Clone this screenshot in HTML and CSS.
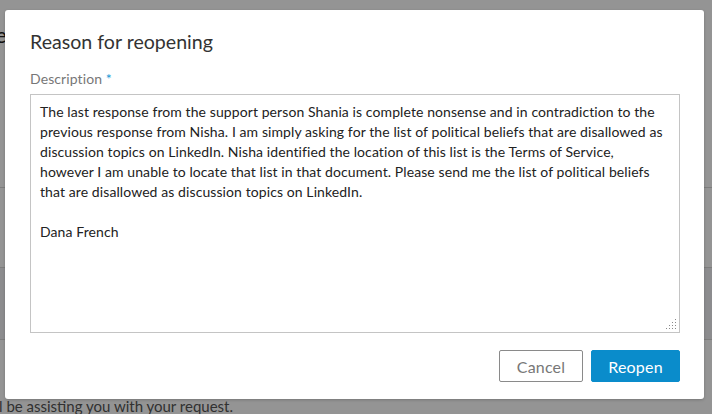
FILE: index.html
```html
<!DOCTYPE html>
<html lang="en">
<head>
<meta charset="utf-8">
<title>Reason for reopening</title>
<link rel="stylesheet" href="styles.css">
</head>
<body>
<div class="page">
  <div class="page-head"><span class="page-title">Case</span></div>
  <div class="page-section"></div>
  <div class="page-band"><span class="band-title">Status</span></div>
  <div class="page-foot"><p class="foot-text">l be assisting you with your request.</p></div>
</div>
<div class="overlay"></div>
<div class="modal" role="dialog" aria-labelledby="modal-title">
  <h2 class="modal-title" id="modal-title">Reason for reopening</h2>
  <label class="field-label" for="desc">Description <span class="req">*</span></label>
  <div class="field-wrap">
    <textarea class="field-text" id="desc">The last response from the support person Shania is complete nonsense and in contradiction to the previous response from Nisha. I am simply asking for the list of political beliefs that are disallowed as discussion topics on LinkedIn. Nisha identified the location of this list is the Terms of Service, however I am unable to locate that list in that document. Please send me the list of political beliefs that are disallowed as discussion topics on LinkedIn.

Dana French</textarea>
    <svg class="grip" width="11" height="11" viewBox="0 0 11 11" aria-hidden="true">
      <g fill="#8a8a8a">
        <rect x="9" y="0" width="1" height="1"/>
        <rect x="6" y="3" width="1" height="1"/><rect x="9" y="3" width="1" height="1"/>
        <rect x="3" y="6" width="1" height="1"/><rect x="6" y="6" width="1" height="1"/><rect x="9" y="6" width="1" height="1"/>
        <rect x="0" y="9" width="1" height="1"/><rect x="3" y="9" width="1" height="1"/><rect x="6" y="9" width="1" height="1"/><rect x="9" y="9" width="1" height="1"/>
      </g>
    </svg>
  </div>
  <div class="modal-actions">
    <button class="btn btn-cancel" type="button">Cancel</button>
    <button class="btn btn-primary" type="button">Reopen</button>
  </div>
</div>
</body>
</html>
```
FILE: styles.css
```css
html, body {
  margin: 0;
  padding: 0;
  width: 712px;
  height: 414px;
  overflow: hidden;
  font-family: Lato, "Open Sans", sans-serif;
}
body {
  position: relative;
  background: #ffffff;
}
.page {
  display: flex;
  flex-direction: column;
  height: 414px;
  color: #333;
}
.page-head {
  height: 188px;
  border-bottom: 1px solid #d8d8d8;
  box-sizing: border-box;
}
.page-title {
  display: block;
  margin-left: -40px;
  margin-top: 22px;
  font-size: 22px;
  line-height: 26px;
  color: #222;
}
.page-section {
  height: 80px;
  border-bottom: 1px solid #d8d8d8;
  box-sizing: border-box;
}
.page-band {
  height: 72px;
  background: #f1f2f4;
  border-bottom: 1px solid #d8d8d8;
  box-sizing: border-box;
  display: flex;
  align-items: center;
}
.band-title {
  margin-left: -55px;
  font-size: 20px;
  color: #222;
}
.page-foot {
  flex: 1;
  display: flex;
  align-items: flex-end;
}
.foot-text {
  margin: 0 0 -2px -1px;
  font-size: 15px;
  line-height: 20px;
  color: #555;
}
.overlay {
  position: absolute;
  inset: 0;
  background: rgba(0, 0, 0, 0.42);
}
.modal {
  position: absolute;
  left: 5px;
  top: 10px;
  width: 699px;
  height: 389px;
  box-sizing: border-box;
  padding: 19px 24px 17px 25px;
  background: #fff;
  border-radius: 3px;
  box-shadow: 0 1px 3px rgba(0, 0, 0, 0.2);
  display: flex;
  flex-direction: column;
  font-family: Lato, "Open Sans", sans-serif;
}
.modal-title {
  margin: 0;
  font-size: 19.6px;
  line-height: 26px;
  font-weight: 400;
  color: #333;
}
.field-label {
  margin: 15px 0 0 0;
  font-size: 14px;
  line-height: 18px;
  letter-spacing: 0.1px;
  color: #777;
}
.req {
  color: #1a9ad6;
}
.field-wrap {
  position: relative;
  margin-top: 6px;
  display: flex;
}
.field-text {
  flex: 1;
  height: 239px;
  box-sizing: border-box;
  padding: 7px 9px;
  border: 1px solid #c4c4c4;
  border-radius: 0;
  font-family: inherit;
  font-size: 14px;
  line-height: 20px;
  letter-spacing: 0.09px;
  color: #222;
  resize: none;
  outline: none;
}
.grip {
  position: absolute;
  right: 3px;
  bottom: 3px;
}
.modal-actions {
  margin-top: auto;
  display: flex;
  justify-content: flex-end;
  gap: 8px;
}
.btn {
  height: 32px;
  box-sizing: border-box;
  font-family: inherit;
  font-size: 16px;
  letter-spacing: 0.2px;
  border-radius: 2px;
  cursor: pointer;
}
.btn-cancel {
  width: 84px;
  background: #fff;
  border: 1px solid #8a8a8a;
  color: #777;
}
.btn-primary {
  width: 89px;
  background: #0a8ccb;
  border: 1px solid #0a8ccb;
  color: #fff;
}
```
